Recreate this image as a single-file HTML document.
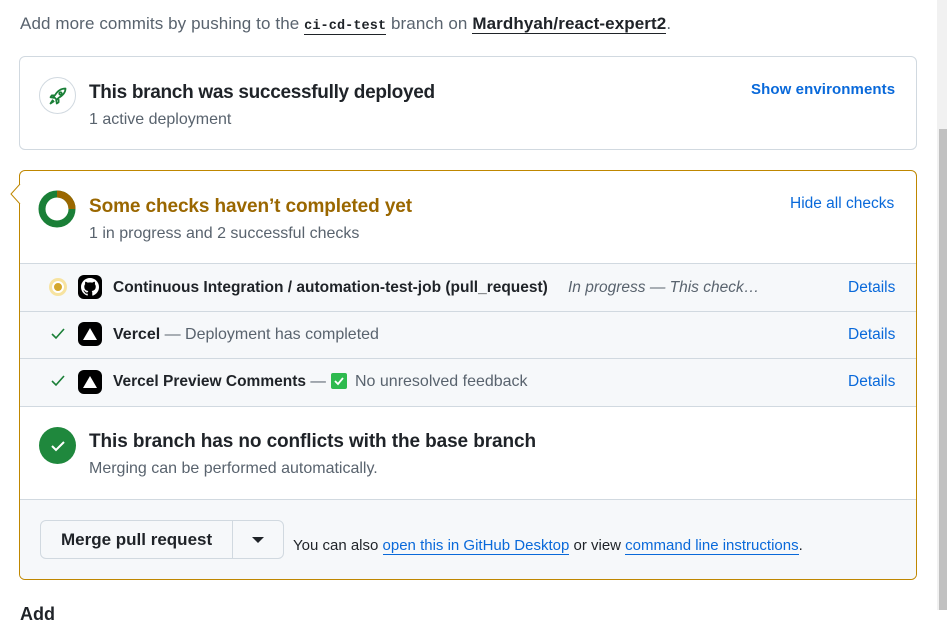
<!DOCTYPE html>
<html><head><meta charset="utf-8"><style>
*{box-sizing:border-box;margin:0;padding:0}
body{width:947px;height:610px;overflow:hidden;background:#fff;font-family:"Liberation Sans",sans-serif;color:#1f2328;position:relative}
.a{position:absolute;white-space:nowrap}
.muted{color:#59636e}
.link{color:#0969da}
.sb{position:absolute;left:937px;top:0;width:10px;height:610px;background:#f1f1f1}
.th{position:absolute;left:939px;top:129px;width:8px;height:481px;background:#c1c1c1}
.row{position:absolute;left:20px;width:896px;height:48px;background:#f6f8fa;border-top:1px solid #d1d9e0}
.icon{position:absolute;left:58px;width:24px;height:24px;border-radius:6px;background:#000}
</style></head><body>
<div class="a muted" style="left:20px;top:14px;font-size:17px;letter-spacing:.1px">Add more commits by pushing to the <span style="font-family:'Liberation Mono',monospace;font-weight:bold;font-size:13.5px;color:#1f2328;border-bottom:1px solid #1f2328">ci-cd-test</span> branch on <span style="color:#1f2328;border-bottom:1px solid #1f2328;font-weight:bold">Mardhyah/react-expert2</span>.</div>

<div class="a" style="left:19px;top:56px;width:898px;height:94px;border:1px solid #d1d9e0;border-radius:6px"></div>
<div class="a" style="left:39px;top:77px;width:37px;height:37px;border:1px solid #d1d9e0;border-radius:50%"></div>
<svg class="a" style="left:48px;top:86px" width="20" height="20" viewBox="0 0 16 16" fill="none" stroke="#1a7f37" stroke-width="1.4" stroke-linejoin="round"><path d="M14 2c-4 0-6.5 2-8.5 5.5L4 8l1.5 1.5L7 11l1.5-1.5C12 7.5 14 5 14 2z"/><circle cx="10" cy="6" r="1"/><path d="M5.5 7.5L3 7.5 2 9l3 .5M8.5 10.5V13L7 14l-.5-3"/><path d="M4 11l-2 3 3-2"/></svg>
<div class="a" style="left:89px;top:82px;font-size:19px;font-weight:bold;letter-spacing:-.3px">This branch was successfully deployed</div>
<div class="a muted" style="left:89px;top:111px;font-size:16px">1 active deployment</div>
<div class="a link" style="left:751px;top:81px;font-size:15px;font-weight:bold;letter-spacing:.1px">Show environments</div>

<div class="a" style="left:19px;top:170px;width:898px;height:410px;border:1px solid #bf8700;border-radius:6px;overflow:hidden;background:#fff">
</div>
<svg class="a" style="left:10px;top:184px" width="11" height="20"><path d="M10 0L1 10l9 10" fill="#fff" stroke="#bf8700"/></svg>
<svg class="a" style="left:38px;top:190px" width="38" height="38" viewBox="0 0 38 38"><circle cx="19" cy="19" r="15" fill="none" stroke="#1a7f37" stroke-width="7"/><path d="M19 4a15 15 0 0 1 15 15" fill="none" stroke="#9a6700" stroke-width="7"/></svg>
<div class="a" style="left:89px;top:196px;font-size:19px;font-weight:bold;color:#9a6700;letter-spacing:-.1px">Some checks haven’t completed yet</div>
<div class="a muted" style="left:89px;top:225px;font-size:16px">1 in progress and 2 successful checks</div>
<div class="a link" style="left:790px;top:195px;font-size:15.5px">Hide all checks</div>

<div class="row" style="top:263px"></div>
<div class="row" style="top:311px"></div>
<div class="row" style="top:358px;height:48px"></div>
<div class="a" style="left:20px;top:406px;width:896px;height:1px;background:#d1d9e0"></div>

<div class="a" style="left:49px;top:278px;width:18px;height:18px;border-radius:50%;background:#f7e3a0"></div>
<div class="a" style="left:52px;top:281px;width:12px;height:12px;border-radius:50%;border:2px solid #fff;background:#d4a72c"></div>
<div class="icon" style="top:275px;left:78px"></div>
<svg class="a" style="left:81px;top:278px" width="18" height="18" viewBox="0 0 16 16"><path fill="#fff" d="M8 0C3.58 0 0 3.58 0 8c0 3.54 2.29 6.53 5.47 7.590.4.07.55-.17.55-.38v-1.33c-2.23.48-2.7-1.07-2.7-1.07-.36-.92-.89-1.170-.89-1.17-.73-.5.06-.49.06-.49.8.06 1.23.82 1.23.82.72 1.22 1.87.87 2.33.66.07-.52.28-.87.51-1.07-1.78-.2-3.64-.89-3.64-3.95 0-.87.31-1.59.82-2.15-.08-.2-.36-1.02.08-2.12 0 0 .67-.21 2.2.82a7.7 7.7 0 0 1 4 0c1.53-1.04 2.2-.82 2.2-.82.44 1.1.16 1.92.08 2.12.51.56.82 1.27.82 2.15 0 3.07-1.87 3.75-3.65 3.95.29.25.54.73.54 1.48v2.2c0 .21.15.46.55.38A8 8 0 0 0 16 8c0-4.42-3.58-8-8-8z"/></svg>
<div class="a" style="left:113px;top:279px;font-size:15.5px;font-weight:bold">Continuous Integration / automation-test-job (pull_request)</div>
<div class="a muted" style="left:568px;top:279px;font-size:15.5px;font-style:italic">In progress — This check…</div>
<div class="a link" style="left:848px;top:279px;font-size:15.5px">Details</div>

<svg class="a" style="left:50px;top:327px" width="16" height="14"><path d="M2 7l4 4 8-9" fill="none" stroke="#1a7f37" stroke-width="1.6"/></svg>
<div class="icon" style="top:322px;left:78px"></div>
<svg class="a" style="left:78px;top:322px" width="24" height="24"><path d="M12 6l7 12H5z" fill="#fff"/></svg>
<div class="a" style="left:113px;top:326px;font-size:16px"><b>Vercel</b> <span class="muted">— Deployment has completed</span></div>
<div class="a link" style="left:848px;top:326px;font-size:15.5px">Details</div>

<svg class="a" style="left:50px;top:374px" width="16" height="14"><path d="M2 7l4 4 8-9" fill="none" stroke="#1a7f37" stroke-width="1.6"/></svg>
<div class="icon" style="top:370px;left:78px"></div>
<svg class="a" style="left:78px;top:370px" width="24" height="24"><path d="M12 6l7 12H5z" fill="#fff"/></svg>
<div class="a" style="left:113px;top:373px;font-size:15.5px"><b>Vercel Preview Comments</b> <span class="muted">—</span></div>
<div class="a" style="left:331px;top:373px;width:16px;height:16px;border-radius:2px;background:#2dba4e"></div>
<svg class="a" style="left:331px;top:373px" width="16" height="16"><path d="M4 8l3 3 5-6" fill="none" stroke="#fff" stroke-width="1.8"/></svg>
<div class="a muted" style="left:355px;top:373px;font-size:16px">No unresolved feedback</div>
<div class="a link" style="left:848px;top:373px;font-size:15.5px">Details</div>

<div class="a" style="left:39px;top:427px;width:37px;height:37px;border-radius:50%;background:#1f883d"></div>
<svg class="a" style="left:48px;top:436px" width="20" height="20"><path d="M4 10l4 4 8-8" fill="none" stroke="#fff" stroke-width="2"/></svg>
<div class="a" style="left:89px;top:431px;font-size:19px;font-weight:bold;letter-spacing:-.1px">This branch has no conflicts with the base branch</div>
<div class="a muted" style="left:89px;top:460px;font-size:16px">Merging can be performed automatically.</div>

<div class="a" style="left:20px;top:499px;width:896px;height:80px;background:#f6f8fa;border-top:1px solid #d1d9e0;border-radius:0 0 5px 5px"></div>
<div class="a" style="left:40px;top:520px;width:244px;height:39px;border:1px solid #d1d9e0;border-radius:6px;background:#f6f8fa"></div>
<div class="a" style="left:232px;top:520px;width:1px;height:39px;background:#d1d9e0"></div>
<div class="a" style="left:61px;top:530px;font-size:17px;font-weight:bold">Merge pull request</div>
<svg class="a" style="left:252px;top:537px" width="12" height="6"><path d="M0 0h12L6 6z" fill="#1f2328"/></svg>
<div class="a" style="left:293px;top:537px;font-size:15px">You can also <span class="link" style="border-bottom:1px solid #0969da">open this in GitHub Desktop</span> or view <span class="link" style="border-bottom:1px solid #0969da">command line instructions</span>.</div>

<div class="a" style="left:20px;top:604px;font-size:18px;font-weight:bold">Add</div>
<div class="sb"></div><div class="th"></div>
</body></html>
